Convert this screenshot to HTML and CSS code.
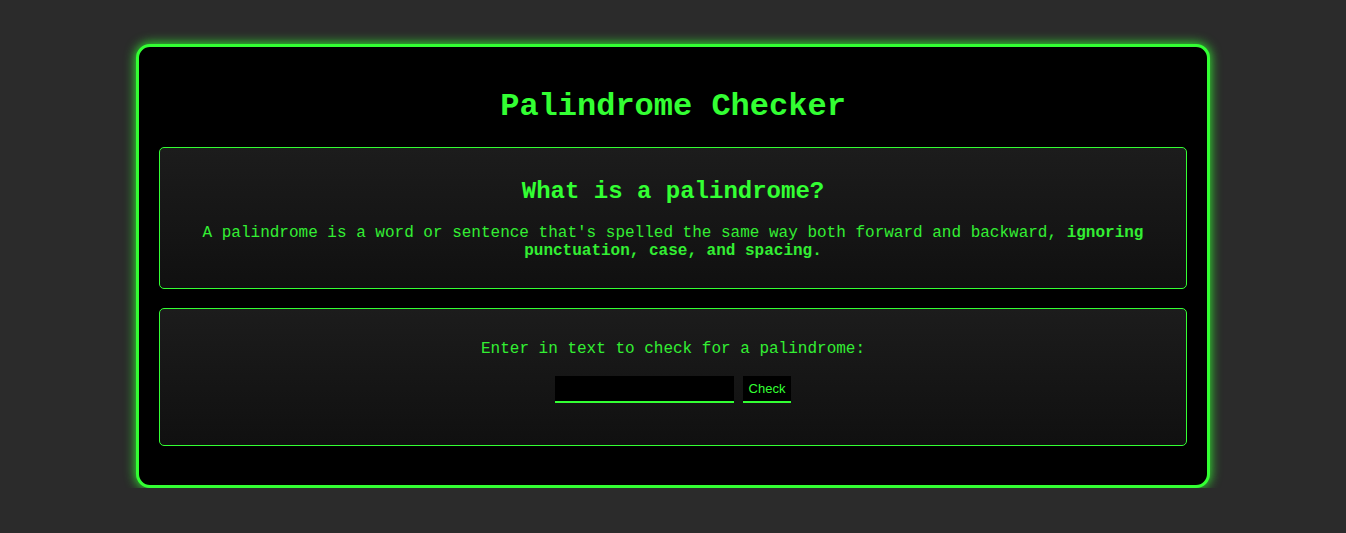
FILE: index.html
```html
<!DOCTYPE html>
<html lang="en">
<head>
<meta charset="utf-8">
<title>Palindrome Checker</title>
<link rel="stylesheet" href="styles.css">
</head>
<body>
<main class="container">
  <h1 class="title">Palindrome Checker</h1>
  <section class="card info">
    <h2 class="card-title">What is a palindrome?</h2>
    <p class="desc">A palindrome is a word or sentence that's spelled the same way both forward and backward, <strong>ignoring punctuation, case, and spacing.</strong></p>
  </section>
  <section class="card checker">
    <label class="prompt" for="text-input">Enter in text to check for a palindrome:</label>
    <div class="controls">
      <input id="text-input" class="text-input" type="text">
      <button class="check-btn" type="button">Check</button>
    </div>
  </section>
</main>
</body>
</html>
```

FILE: styles.css
```css
html, body {
  margin: 0;
  padding: 0;
}
body {
  background: #2b2b2b;
  font-family: "Liberation Mono", "Courier New", monospace;
  color: #33ee33;
  padding-top: 44px;
}
.container {
  box-sizing: border-box;
  width: 1074px;
  margin: 0 auto;
  background: #000;
  border: 3px solid #33ff33;
  border-radius: 14px;
  box-shadow: 0 0 12px #33ff33;
  padding: 20px 20px 39px;
}
.title {
  margin: 22px 0 22px;
  text-align: center;
  font-size: 32px;
  line-height: 36px;
  font-weight: bold;
  color: #33ff33;
}
.card {
  border: 1px solid #33ff33;
  border-radius: 5px;
  background: linear-gradient(to bottom, #1c1c1c, #101010);
  text-align: center;
}
.info {
  padding: 20px 40px 12px;
}
.card-title {
  margin: 10px 0 18px;
  font-size: 24px;
  line-height: 28px;
  font-weight: bold;
  color: #33ff33;
}
.desc {
  margin: 0 0 16px;
  font-size: 16px;
  line-height: 18px;
}
.desc strong {
  font-weight: bold;
}
.checker {
  margin-top: 19px;
  padding: 31px 20px 42px;
}
.prompt {
  display: block;
  font-size: 16px;
  line-height: 18px;
}
.controls {
  margin-top: 18px;
  display: flex;
  justify-content: center;
  gap: 9px;
}
.text-input {
  width: 179px;
  height: 27px;
  box-sizing: border-box;
  background: #000;
  border: none;
  border-bottom: 2px solid #33ff33;
  color: #33ff33;
  padding: 0 4px;
  outline: none;
  font-family: "Liberation Sans", Arial, sans-serif;
}
.check-btn {
  height: 27px;
  box-sizing: border-box;
  background: #000;
  border: none;
  border-bottom: 2px solid #33ff33;
  color: #33ff33;
  font-family: "Liberation Sans", Arial, sans-serif;
  font-size: 13px;
  padding: 0 6px;
  cursor: pointer;
}
```
